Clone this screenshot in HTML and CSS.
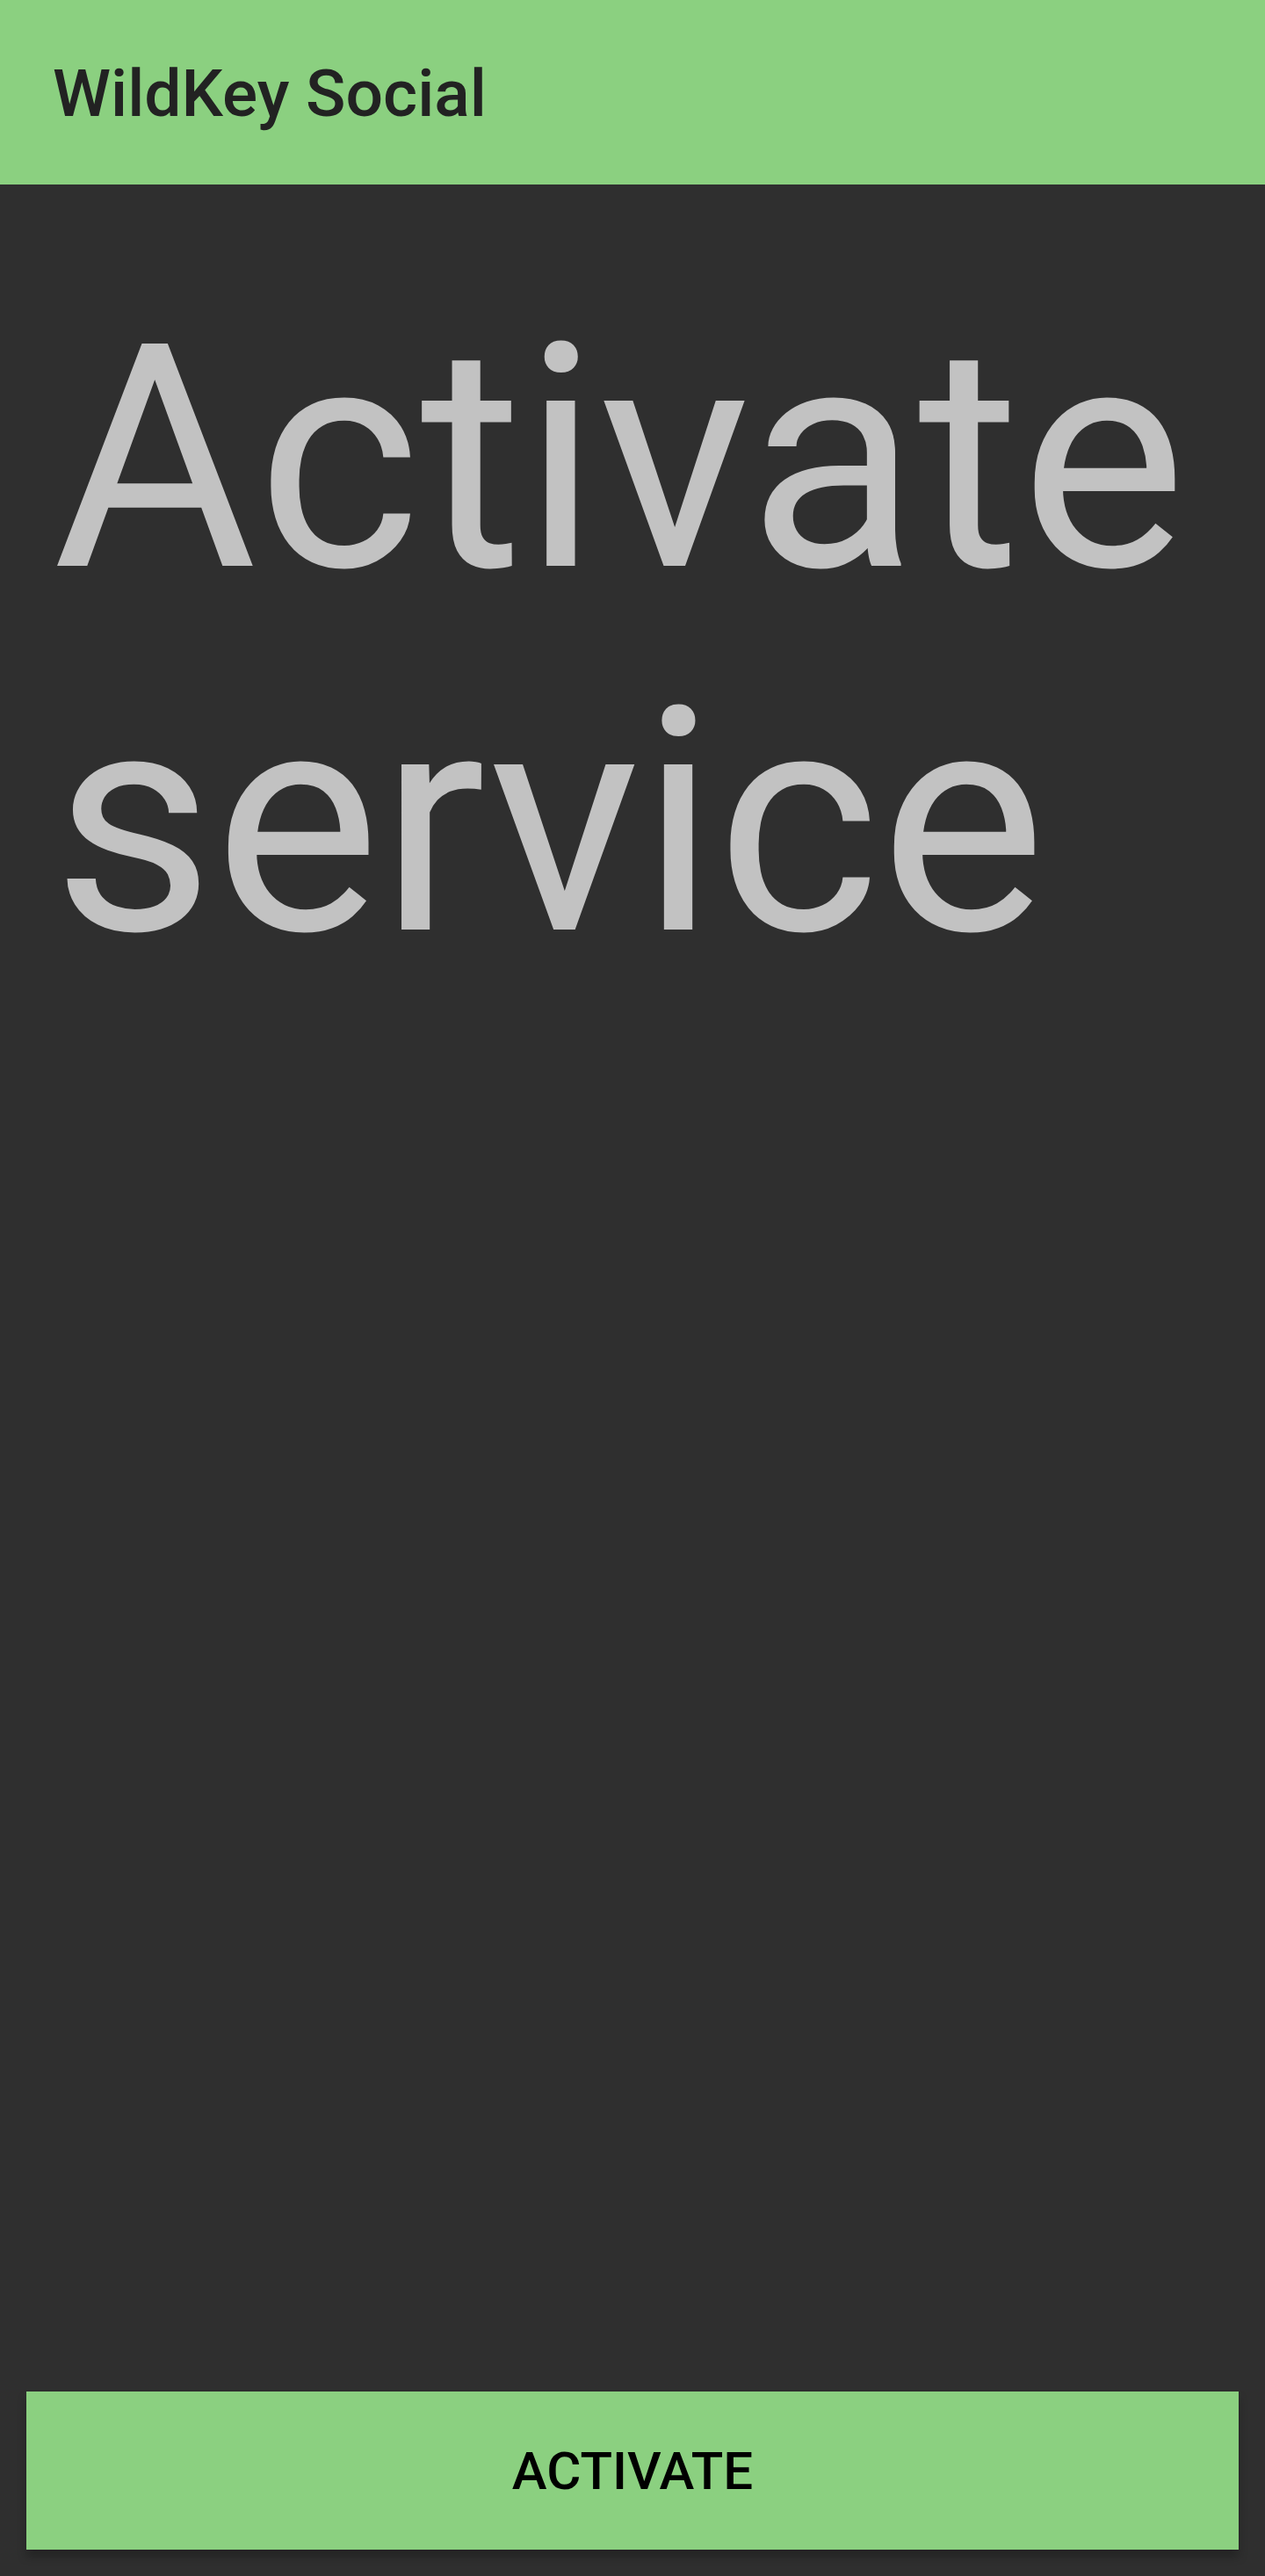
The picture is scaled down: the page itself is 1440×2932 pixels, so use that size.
FILE: index.html
```html
<!DOCTYPE html>
<html>
<head>
<meta charset="utf-8">
<title>WildKey Social</title>
<link rel="stylesheet" href="styles.css">
</head>
<body>
<div class="app">
  <header class="toolbar">
    <h1 class="toolbar-title">WildKey Social</h1>
  </header>
  <main class="content">
    <p class="headline">Activate service</p>
  </main>
  <div class="actions">
    <button class="activate-btn" type="button">ACTIVATE</button>
  </div>
</div>
</body>
</html>
```

FILE: styles.css
```css
html, body {
  margin: 0;
  padding: 0;
  background: #2f2f2f;
}
body {
  font-family: Roboto, "Liberation Sans", sans-serif;
}
.app {
  display: flex;
  flex-direction: column;
  height: 2932px;
}
.toolbar {
  height: 210px;
  background: #8bd080;
  display: flex;
  align-items: center;
  padding: 0 60px;
  box-sizing: border-box;
  flex: none;
}
.toolbar-title {
  margin: 0;
  font-size: 75px;
  font-weight: 500;
  color: #222222;
  line-height: 1;
  padding-top: 2px;
}
.content {
  flex: 1;
  padding: 106px 60px 0;
}
.headline {
  margin: 0;
  font-size: 356px;
  font-weight: 400;
  line-height: 414px;
  color: #c2c2c2;
}
.actions {
  flex: none;
  padding: 0 30px 30px;
}
.activate-btn {
  display: block;
  width: 100%;
  height: 180px;
  border: none;
  background: #8bd080;
  color: #000000;
  font-family: Roboto, "Liberation Sans", sans-serif;
  font-size: 60px;
  font-weight: 500;
  letter-spacing: 0;
  box-shadow: 0 8px 10px rgba(0, 0, 0, 0.25);
  padding: 0;
}
```
